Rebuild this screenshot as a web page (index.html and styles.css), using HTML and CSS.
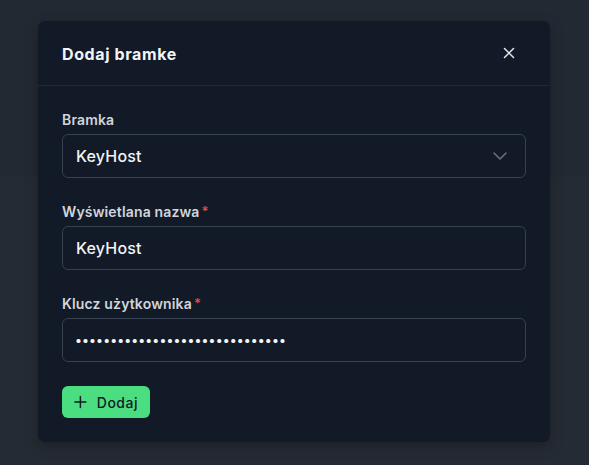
FILE: index.html
```html
<!DOCTYPE html>
<html lang="pl">
<head>
<meta charset="utf-8">
<title>Dodaj bramke</title>
<link rel="stylesheet" href="styles.css">
</head>
<body>
<div class="page">
  <div class="band-top"></div>
  <div class="band-bottom"></div>
</div>
<div class="overlay">
  <div class="modal">
    <div class="modal-header">
      <h2 class="modal-title">Dodaj bramke</h2>
      <button class="close-btn" aria-label="Zamknij">
        <svg width="12" height="12" viewBox="0 0 12 12"><path d="M1.5 1.5 L10.5 10.5 M10.5 1.5 L1.5 10.5" stroke="currentColor" stroke-width="1.5" stroke-linecap="round"/></svg>
      </button>
    </div>
    <div class="modal-body">
      <div class="field">
        <label class="label">Bramka</label>
        <div class="select">
          <span class="select-value">KeyHost</span>
          <svg class="chevron" width="14" height="8" viewBox="0 0 14 8"><path d="M1 1 L7 7 L13 1" fill="none" stroke="currentColor" stroke-width="1.5" stroke-linecap="round" stroke-linejoin="round"/></svg>
        </div>
      </div>
      <div class="field">
        <label class="label">Wyświetlana nazwa<span class="req">*</span></label>
        <input class="input" type="text" value="KeyHost">
      </div>
      <div class="field">
        <label class="label">Klucz użytkownika<span class="req">*</span></label>
        <input class="input pw" type="password" value="abcdefghijabcdefghijabcdefghij">
      </div>
      <button class="add-btn">
        <svg width="14" height="14" viewBox="0 0 14 14"><path d="M7 1 V13 M1 7 H13" stroke="currentColor" stroke-width="1.6" stroke-linecap="round"/></svg>
        <span>Dodaj</span>
      </button>
    </div>
  </div>
</div>
</body>
</html>
```

FILE: styles.css
```css
* { box-sizing: border-box; }
html, body {
  margin: 0;
  padding: 0;
  width: 589px;
  height: 465px;
  overflow: hidden;
  font-family: Inter, "Noto Sans", sans-serif;
}
body { background: #242a33; position: relative; }
.page {
  display: flex;
  flex-direction: column;
  height: 100%;
}
.band-top {
  height: 177px;
  background: #232932;
}
.band-bottom {
  flex: 1;
  background: #252b34;
}
.overlay {
  position: absolute;
  inset: 0;
  display: flex;
  align-items: flex-start;
  justify-content: flex-start;
  padding: 21px 0 0 38px;
}
.modal {
  width: 512px;
  background: #121927;
  border-radius: 7px;
  box-shadow: 0 4px 14px rgba(0,0,0,0.25);
}
.modal-header {
  display: flex;
  align-items: center;
  justify-content: space-between;
  height: 65px;
  padding: 0 24px;
  border-bottom: 1px solid #1f2937;
}
.modal-title {
  margin: 0;
  font-size: 16px;
  font-weight: 700;
  color: #f3f4f6;
  letter-spacing: 0.6px;
  padding-top: 2px;
}
.close-btn {
  background: none;
  border: 0;
  padding: 0;
  margin-right: 11px;
  color: #e5e7eb;
  display: flex;
}
.modal-body {
  padding: 24px 24px 24px;
  display: flex;
  flex-direction: column;
}
.field {
  display: flex;
  flex-direction: column;
  gap: 4px;
  margin-bottom: 24px;
}
.label {
  display: block;
  height: 20px;
  font-size: 14px;
  line-height: 20px;
  font-weight: 600;
  color: #d1d5db;
  letter-spacing: 0.15px;
}
.req {
  color: #ef4444;
  margin-left: 2px;
  font-size: 13px;
  line-height: 1;
  vertical-align: 1px;
}
.select, .input {
  height: 44px;
  border: 1px solid #374151;
  border-radius: 6px;
  background: #121927;
  color: #f3f4f6;
  font-family: inherit;
  font-size: 16px;
  font-weight: 500;
  padding: 0 13px;
  letter-spacing: 0.2px;
}
.select {
  display: flex;
  align-items: center;
  justify-content: space-between;
}
.chevron {
  color: #6b7280;
  margin-right: 5px;
}
.input { outline: none; width: 100%; }
.pw { font-size: 13px; letter-spacing: 0.1px; padding-left: 12px; }
.add-btn {
  align-self: flex-start;
  display: flex;
  align-items: center;
  gap: 10px;
  width: 88px;
  height: 32px;
  padding: 0 12px 0 12px;
  border: 0;
  border-radius: 6px;
  background: #4ade80;
  color: #111827;
  font-family: inherit;
  font-size: 14px;
  font-weight: 500;
  letter-spacing: 0.5px;
}
```
